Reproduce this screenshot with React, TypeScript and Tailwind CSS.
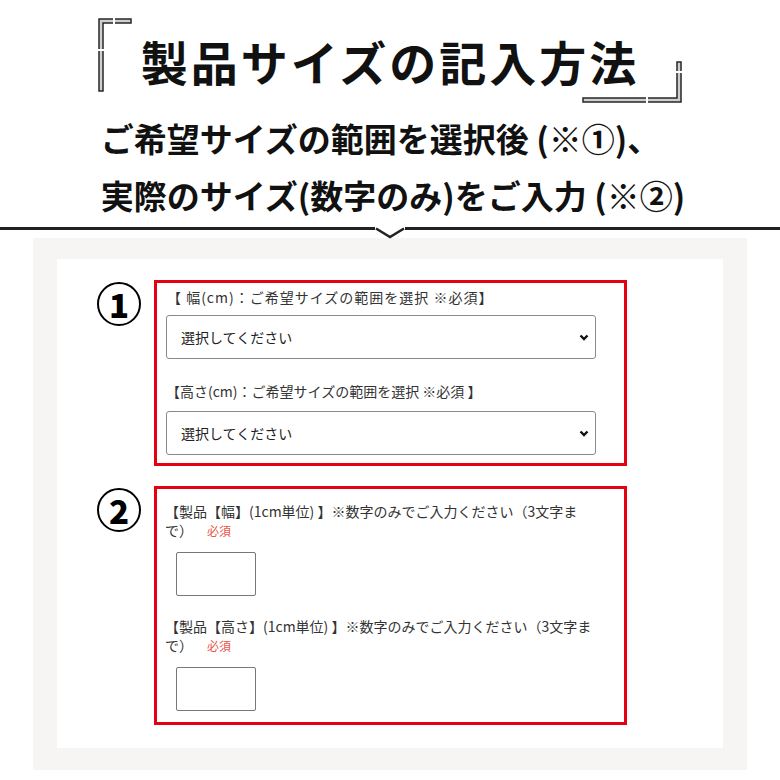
const jp = "font-['Noto_Sans_CJK_JP','Noto_Sans',sans-serif]";

function LeftBracket() {
  return (
    <svg width="34" height="74" viewBox="0 0 34 74" className="absolute left-[98px] top-[18px]">
      <path d="M1 73 V1 H33 V5 H5 V73 Z" fill="#cfcfcf" stroke="#2a2626" strokeWidth="1.5" />
      <rect x="0" y="31" width="6" height="2" fill="#fff" />
      <rect x="15" y="0" width="2" height="6" fill="#fff" />
    </svg>
  );
}

function RightBracket() {
  return (
    <svg width="100" height="42" viewBox="0 0 100 42" className="absolute left-[582px] top-[61px]">
      <path d="M99 1 V41 H1 V37 H95 V1 Z" fill="#cfcfcf" stroke="#2a2626" strokeWidth="1.5" />
      <rect x="94" y="10" width="6" height="2" fill="#fff" />
      <rect x="64" y="36" width="2" height="6" fill="#fff" />
    </svg>
  );
}

function Chevron() {
  return (
    <svg width="10" height="7" viewBox="0 0 10 7">
      <polyline points="1.5,1.5 5,5 8.5,1.5" fill="none" stroke="#111" strokeWidth="2.4" />
    </svg>
  );
}

function Circled({ n }: { n: string }) {
  return (
    <div className="mt-[2px] flex h-[44px] w-[44px] shrink-0 items-center justify-center rounded-full border-2 border-black">
      <span className="font-['Noto_Sans_CJK_JP',sans-serif] text-[33px] font-black leading-none text-black">{n}</span>
    </div>
  );
}

function SelectBox() {
  return (
    <div className="flex h-[44px] w-[430px] items-center justify-between rounded-[3px] border border-[#8a8a8a] bg-white pl-[14px] pr-[6px] text-[14px] tracking-normal text-[#222]">
      <span>選択してください</span>
      <Chevron />
    </div>
  );
}

function NumberField({ first, rest }: { first: string; rest: string }) {
  return (
    <div>
      <p className="pl-[8px] text-[14px] leading-[19px] text-[#333]">
        {first}
        <br />
        {rest}
        <span className="ml-[14px] text-[12px] text-[#e8574a]">必須</span>
      </p>
      <div className="ml-[19px] mt-[12px] h-[44px] w-[80px] rounded-[2px] border border-[#777] bg-white" />
    </div>
  );
}

export default function App() {
  return (
    <div className={`${jp} min-h-screen bg-white text-black`}>
      <header className="relative h-[110px]">
        <LeftBracket />
        <RightBracket />
        <h1 className="pt-[36px] text-center text-[47px] font-bold leading-[50px] tracking-[3px] text-[#111]">
          製品サイズの記入方法
        </h1>
      </header>

      <div className="flex justify-center">
        <p className="ml-[6px] text-left text-[33px] font-bold leading-[57px] text-[#111]">
          ご希望サイズの範囲を選択後 (※①)、
          <br />
          実際のサイズ(数字のみ)をご入力 (※②)
        </p>
      </div>

      <div className="relative mt-[3px] h-[3px] bg-[#222]">
        <svg width="30" height="12" viewBox="0 0 30 12" className="absolute left-[375px] top-0">
          <rect x="0" y="0" width="30" height="3" fill="#fff" />
          <polyline points="1,1.5 15,10 29,1.5" fill="none" stroke="#222" strokeWidth="2.6" />
        </svg>
      </div>

      <section className="mx-[33px] mt-[8px] bg-[#f7f4f4] px-[24px] pb-[22px] pt-[21px]">
        <div className="bg-white pb-[23px] pl-[40px] pt-[21px]">
          <div className="flex items-start gap-[13px]">
            <Circled n="1" />
            <div className="w-[473px] border-[3px] border-[#e60012] pb-[8px] pl-[9px] pt-[4px] text-[14px] text-[#333]">
              <p className="pl-[1px] leading-[20px] tracking-[1px]">【 幅(cm)：ご希望サイズの範囲を選択 ※必須】</p>
              <div className="mt-[8px]">
                <SelectBox />
              </div>
              <p className="mt-[22px] leading-[20px]">【高さ(cm)：ご希望サイズの範囲を選択 ※必須 】</p>
              <div className="mt-[10px]">
                <SelectBox />
              </div>
            </div>
          </div>

          <div className="mt-[20px] flex items-start gap-[13px]">
            <Circled n="2" />
            <div className="w-[473px] border-[3px] border-[#e60012] pb-[11px] pt-[13px]">
              <NumberField first="【製品【幅】(1cm単位) 】※数字のみでご入力ください（3文字ま" rest="で）" />
              <div className="mt-[21px]">
                <NumberField first="【製品【高さ】(1cm単位) 】※数字のみでご入力ください（3文字ま" rest="で）" />
              </div>
            </div>
          </div>
        </div>
      </section>
    </div>
  );
}
